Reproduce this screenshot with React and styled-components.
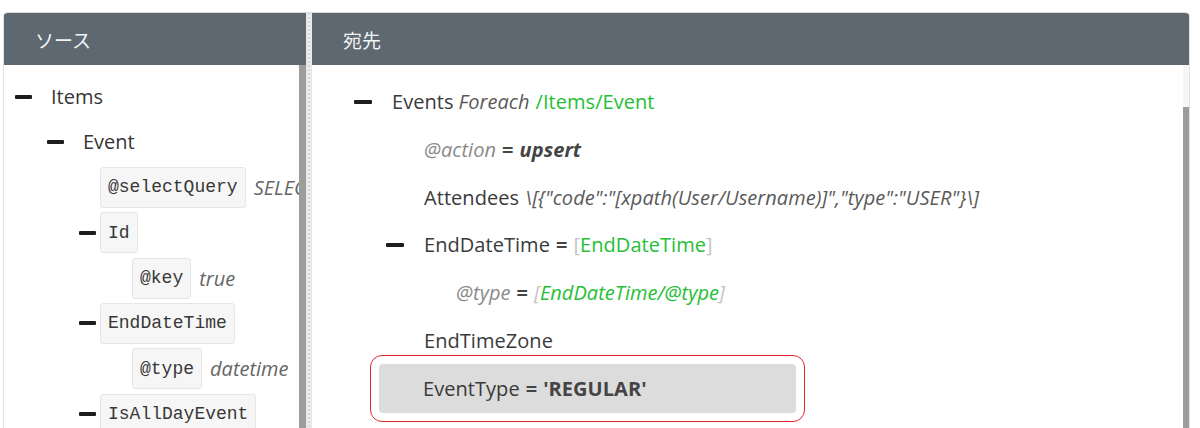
import React from "react";
import styled, { createGlobalStyle } from "styled-components";

const GlobalStyle = createGlobalStyle`
  html, body {
    margin: 0;
    padding: 0;
    background: #ffffff;
    overflow: hidden;
  }
  body {
    font-family: "Open Sans", "Noto Sans CJK JP", sans-serif;
  }
`;

const Frame = styled.div`
  display: flex;
  width: 1187px;
  height: 460px;
  margin: 12px 0 0 3px;
  border-top: 1px solid #dcdcdc;
  border-radius: 5px 5px 0 0;
  overflow: hidden;
`;

const Panel = styled.div`
  display: flex;
  flex-direction: column;
  flex: ${(p) => (p.$grow ? "1" : "0 0 auto")};
  width: ${(p) => (p.$width ? `${p.$width}px` : "auto")};
  border-left: ${(p) => (p.$side === "left" ? "1px solid #e2e2e2" : "none")};
  border-right: ${(p) => (p.$side === "right" ? "1px solid #e2e2e2" : "none")};
  min-width: 0;
`;

const Header = styled.div`
  height: 52px;
  display: flex;
  align-items: center;
  padding-left: ${(p) => p.$pad}px;
  background: #5d6870;
  color: #f1f3f4;
  font-family: "Noto Sans CJK JP", "Open Sans", sans-serif;
  font-size: 19px;
  flex: 0 0 auto;
`;

const Body = styled.div`
  display: flex;
  flex: 1;
  min-height: 0;
`;

const Content = styled.div`
  flex: 1;
  min-width: 0;
  overflow: hidden;
  display: flex;
  flex-direction: column;
  padding-top: ${(p) => p.$top}px;
  gap: ${(p) => p.$gap}px;
`;

const ScrollTrack = styled.div`
  width: ${(p) => p.$width}px;
  background: #f6f6f6;
  display: flex;
  flex-direction: column;
  padding-top: ${(p) => p.$offset}px;
`;

const Thumb = styled.div`
  flex: 1;
  background: #9d9d9d;
`;

const Splitter = styled.div`
  width: 6px;
  flex: 0 0 auto;
  background:
    repeating-linear-gradient(to bottom, #d9d9d9 0 2px, #f0f0f0 2px 4px) center / 2px 100% no-repeat,
    #e9e9e9;
`;

const SrcRow = styled.div`
  display: flex;
  align-items: center;
  height: 41px;
  padding-left: ${(p) => 11 + p.$level * 32}px;
  white-space: nowrap;
`;

const Toggle = styled.span`
  flex: 0 0 auto;
  width: ${(p) => p.$w}px;
  height: 4px;
  border-radius: 1px;
  background: ${(p) => (p.$on ? "#1d1d1d" : "transparent")};
  margin-right: ${(p) => p.$gap}px;
`;

const Label = styled.span`
  font-size: 20px;
  color: #363636;
`;

const TagBox = styled.span`
  display: inline-flex;
  align-items: center;
  height: 39px;
  padding: 0 7px;
  border: 1px solid #e6e6e6;
  border-radius: 3px;
  background: #f6f6f6;
  font-family: "Liberation Mono", "DejaVu Sans Mono", monospace;
  font-size: 18px;
  color: #383838;
`;

const AttrValue = styled.span`
  margin-left: 8px;
  font-size: 20px;
  font-style: italic;
  color: #666;
`;

const DstRow = styled.div`
  display: flex;
  align-items: center;
  height: ${(p) => (p.$selected ? 49 : 47.7)}px;
  margin-left: ${(p) => (p.$selected ? 0 : 36 + p.$level * 32)}px;
  padding-left: 6px;
  width: ${(p) => (p.$selected ? "417px" : "auto")};
  box-sizing: border-box;
  border-radius: 4px;
  background: ${(p) => (p.$selected ? "#dcdcdc" : "transparent")};
  white-space: nowrap;
  font-size: 20px;
  letter-spacing: 0.05px;
  color: #3a3a3a;
`;

const Annotation = styled.div`
  align-self: flex-start;
  margin: -9.5px 0 0 ${(p) => 26 + p.$level * 32}px;
  padding: 8px;
  border: 1.5px solid #e3242b;
  border-radius: 12px;
`;

const Part = styled.span`
  font-style: ${(p) => (p.$italic ? "italic" : "normal")};
  font-weight: ${(p) => (p.$bold ? 700 : 400)};
  color: ${(p) =>
    ({ green: "#25c035", muted: "#8a8a8a", soft: "#5a5a5a", bracket: "#c4c4c4", strong: "#444444" }[p.$tone] ||
    "#3a3a3a")};
  margin-left: ${(p) => p.$space || 0}px;
`;

const sourceTree = [
  { level: 0, toggle: true, label: "Items" },
  { level: 1, toggle: true, label: "Event" },
  { level: 2, box: "@selectQuery", value: "SELECT * FROM Event" },
  { level: 2, toggle: true, box: "Id" },
  { level: 3, box: "@key", value: "true" },
  { level: 2, toggle: true, box: "EndDateTime" },
  { level: 3, box: "@type", value: "datetime" },
  { level: 2, toggle: true, box: "IsAllDayEvent" },
];

const Eq = () => <Part $bold $tone="strong" $space={6}>=</Part>;

const SourceNode = ({ node }) => (
  <SrcRow $level={node.level}>
    <Toggle $on={node.toggle} $w={17} $gap={node.box ? 4 : 19} />
    {node.label && <Label>{node.label}</Label>}
    {node.box && <TagBox>{node.box}</TagBox>}
    {node.value && <AttrValue>{node.value}</AttrValue>}
  </SrcRow>
);

const DestNode = ({ level, toggle, selected, children }) => (
  <DstRow $level={level} $selected={selected}>
    <Toggle $on={toggle} $w={18} $gap={20} />
    {children}
  </DstRow>
);

export default function App() {
  return (
    <>
      <GlobalStyle />
      <Frame>
        <Panel $width={302} $side="left">
          <Header $pad={31}>ソース</Header>
          <Body>
            <Content $top={11} $gap={4.4}>
              {sourceTree.map((node, i) => (
                <SourceNode key={i} node={node} />
              ))}
            </Content>
            <ScrollTrack $width={7} $offset={0}>
              <Thumb />
            </ScrollTrack>
          </Body>
        </Panel>
        <Splitter />
        <Panel $grow $side="right">
          <Header $pad={31}>宛先</Header>
          <Body>
            <Content $top={13} $gap={0}>
              <DestNode level={0} toggle>
                <Part>Events</Part>
                <Part $italic $tone="soft" $space={5}>Foreach</Part>
                <Part $tone="green" $space={6}>/Items/Event</Part>
              </DestNode>
              <DestNode level={1}>
                <Part $italic $tone="muted">@action</Part>
                <Eq />
                <Part $italic $bold $tone="strong" $space={6}>upsert</Part>
              </DestNode>
              <DestNode level={1}>
                <Part>Attendees</Part>
                <Part $italic $tone="soft" $space={6}>
                  {'\\[{"code":"[xpath(User/Username)]","type":"USER"}\\]'}
                </Part>
              </DestNode>
              <DestNode level={1} toggle>
                <Part>EndDateTime</Part>
                <Eq />
                <Part $tone="bracket" $space={6}>[</Part>
                <Part $tone="green">EndDateTime</Part>
                <Part $tone="bracket">]</Part>
              </DestNode>
              <DestNode level={2}>
                <Part $italic $tone="muted">@type</Part>
                <Eq />
                <Part $italic $tone="bracket" $space={6}>[</Part>
                <Part $italic $tone="green">EndDateTime/@type</Part>
                <Part $italic $tone="bracket">]</Part>
              </DestNode>
              <DestNode level={1}>
                <Part>EndTimeZone</Part>
              </DestNode>
              <Annotation $level={1}>
                <DestNode level={1} selected>
                  <Part>EventType</Part>
                  <Eq />
                  <Part $bold $tone="strong" $space={6}>'REGULAR'</Part>
                </DestNode>
              </Annotation>
            </Content>
            <ScrollTrack $width={6} $offset={42}>
              <Thumb />
            </ScrollTrack>
          </Body>
        </Panel>
      </Frame>
    </>
  );
}
